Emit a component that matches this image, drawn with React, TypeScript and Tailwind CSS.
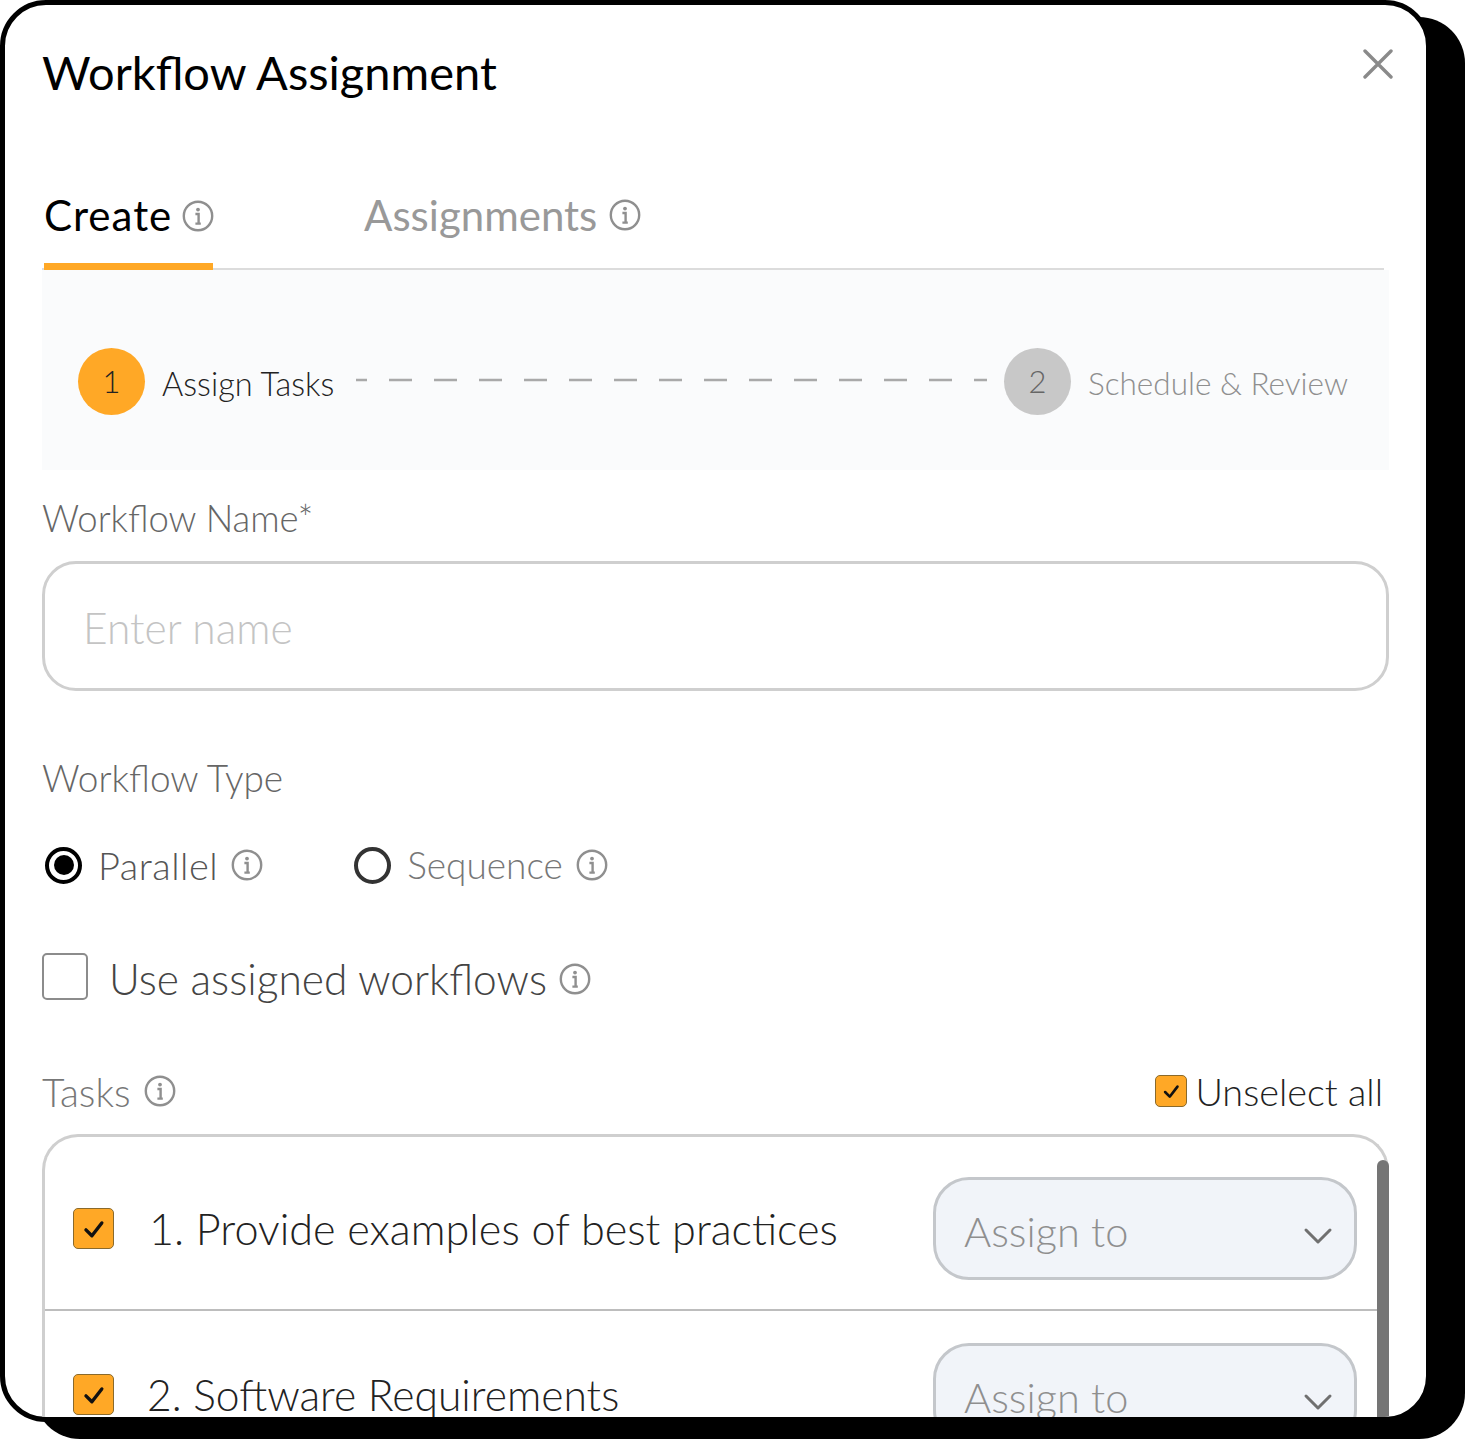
const InfoIcon = ({ size = 32, color = '#8f8f8f' }: { size?: number; color?: string }) => (
  <svg width={size} height={size} viewBox="0 0 32 32" fill="none" className="shrink-0">
    <circle cx="16" cy="16" r="14.2" stroke={color} strokeWidth="2.4" />
    <circle cx="16" cy="9.6" r="1.9" fill={color} />
    <path d="M13.4 14h3.2v9M13.4 23.6h5.4" stroke={color} strokeWidth="2.4" />
  </svg>
);

const CheckBox = ({ size }: { size: number }) => (
  <div
    className="flex shrink-0 items-center justify-center rounded-[5px] border border-[#8a6a2c] bg-[#ffa826]"
    style={{ width: size, height: size }}
  >
    <svg width={size * 0.58} height={size * 0.58} viewBox="0 0 24 24" fill="none">
      <path d="M4 13l6 6L20 6" stroke="#111" strokeWidth="3.4" strokeLinecap="round" strokeLinejoin="round" />
    </svg>
  </div>
);

const Select = () => (
  <div className="flex h-[103px] w-[424px] shrink-0 items-center justify-between rounded-[36px] border-[3px] border-[#c4c7cb] bg-[#f1f4f9] pl-[28px] pr-[21px]">
    <span className="mt-[5px] text-[41.5px] font-light text-[#8f8f8f]">Assign to</span>
    <svg width="30" height="20" viewBox="0 0 30 20" fill="none" className="mt-[15px]">
      <path d="M3 4l12 12L27 4" stroke="#707070" strokeWidth="3" strokeLinecap="round" strokeLinejoin="round" />
    </svg>
  </div>
);

const tasks = [
  { label: '1. Provide examples of best practices' },
  { label: '2. Software Requirements' },
];

export default function App() {
  return (
    <div className="h-[1440px] w-[1465px] overflow-hidden bg-white font-['Lato',sans-serif]">
      <div className="relative h-[1422px] w-[1431px] overflow-hidden rounded-[46px] border-[5px] border-black bg-white shadow-[34px_17px_0_0_#000]">
        <div className="flex items-start justify-between pl-[37px] pr-[33px] pt-[39px]">
          <h1 className="text-[47px] leading-[56px] font-normal text-black">Workflow Assignment</h1>
          <svg width="30" height="30" viewBox="0 0 30 30" fill="none" className="mt-[5px]">
            <path d="M2 2l26 26M28 2L2 28" stroke="#8a8a8a" strokeWidth="3.4" strokeLinecap="round" />
          </svg>
        </div>

        <div className="ml-[37px] mt-[86px] flex h-[84px] w-[1342px] border-b-2 border-[#dcdcdc]">
          <div className="-mb-[2px] ml-[2px] flex h-[84px] w-[169px] items-center gap-[10px] border-b-[7px] border-[#ffa826] pb-[20px]">
            <span className="text-[42px] leading-[56px] tracking-[1px] text-black">Create</span>
            <div className="mt-[3px]"><InfoIcon /></div>
          </div>
          <div className="ml-[151px] flex h-[84px] items-center gap-[12px] pb-[27px]">
            <span className="text-[42px] leading-[56px] text-[#999999]">Assignments</span>
            <InfoIcon />
          </div>
        </div>

        <div className="ml-[37px] flex h-[200px] w-[1347px] items-center bg-[#fafbfc] pl-[36px] pt-[22px]">
          <div className="flex h-[67px] w-[67px] shrink-0 items-center justify-center rounded-full bg-[#ffa826] text-[31px] font-light text-[#222]">1</div>
          <span className="ml-[17px] w-[194px] pt-[6px] text-[32.5px] font-light text-[#222]">Assign Tasks</span>
          <svg width="631" height="4" className="mb-[2px] shrink-0">
            <line x1="0" y1="2" x2="631" y2="2" stroke="#a9a9a9" strokeWidth="2.5" strokeDasharray="23 22" strokeDashoffset="12" />
          </svg>
          <div className="ml-[17px] flex h-[67px] w-[67px] shrink-0 items-center justify-center rounded-full bg-[#c8c8c8] text-[31px] font-light text-[#666]">2</div>
          <span className="ml-[17px] pt-[6px] text-[31.5px] font-light text-[#8f8f8f]">Schedule &amp; Review</span>
        </div>

        <div className="ml-[37px] w-[1347px]">
          <div className="mt-[26px] text-[36.5px] leading-[44px] font-light text-[#666]">Workflow Name*</div>
          <div className="mt-[21px] flex h-[130px] items-center rounded-[34px] border-[3px] border-[#cfcfcf] pl-[38px]">
            <span className="mt-[4px] text-[42.5px] font-light text-[#c4c4c4]">Enter name</span>
          </div>

          <div className="mt-[65px] text-[37px] leading-[44px] font-light text-[#666]">Workflow Type</div>

          <div className="mt-[45px] flex h-[40px] items-center pl-[3px]">
            <div className="flex h-[37px] w-[37px] items-center justify-center rounded-full border-[4px] border-black">
              <div className="h-[20px] w-[20px] rounded-full bg-black" />
            </div>
            <span className="ml-[16px] text-[38px] tracking-[0.5px] font-light text-[#555]">Parallel</span>
            <div className="ml-[13px]"><InfoIcon /></div>
            <div className="ml-[91px] h-[37px] w-[37px] rounded-full border-[4px] border-[#333]" />
            <span className="ml-[16px] text-[37px] font-light text-[#777]">Sequence</span>
            <div className="ml-[13px]"><InfoIcon /></div>
          </div>

          <div className="mt-[68px] flex h-[47px] items-center">
            <div className="h-[47px] w-[46px] rounded-[5px] border-2 border-[#8c8c8c]" />
            <span className="ml-[21px] pt-[4px] text-[42.5px] font-light text-[#444]">Use assigned workflows</span>
            <div className="ml-[12px] mt-[5px]"><InfoIcon /></div>
          </div>

          <div className="mt-[71px] flex h-[40px] items-center justify-between pr-[6px]">
            <div className="flex items-center gap-[13px]">
              <span className="pt-[3px] text-[39px] font-light text-[#777]">Tasks</span>
              <InfoIcon />
            </div>
            <div className="flex items-center gap-[8px]">
              <CheckBox size={32} />
              <span className="pt-[3px] text-[37.8px] font-light text-[#222]">Unselect all</span>
            </div>
          </div>

          <div className="relative mt-[23px] rounded-t-[36px] border-x-[3px] border-t-[3px] border-[#cfcfcf]">
            {tasks.map((task, idx) => (
              <div
                key={idx}
                className={`flex items-center pl-[28px] pr-[29px] ${idx === 0 ? 'border-b-2 border-[#bdbdbd] pb-[29px] pt-[40px]' : 'pt-[32px]'}`}
              >
                <CheckBox size={41} />
                <span className={`flex-1 font-light text-[#222] ${idx === 0 ? 'ml-[35px] text-[43.2px]' : 'ml-[33px] text-[42.6px]'}`}>{task.label}</span>
                <Select />
              </div>
            ))}
            <div className="absolute -right-[3px] bottom-0 top-[23px] w-[12px] rounded-t-full bg-[#757575]" />
          </div>
        </div>
      </div>
    </div>
  );
}
